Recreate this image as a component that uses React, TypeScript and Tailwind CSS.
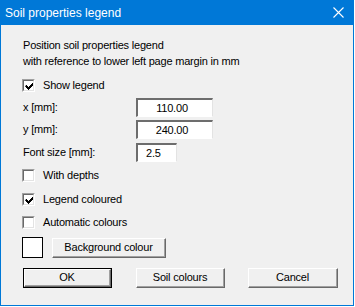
import React from "react";

const font = { fontFamily: '"Liberation Sans", Arial, sans-serif' };

function Check({ checked }: { checked: boolean }) {
  return (
    <div className="w-[13px] h-[13px] bg-white border-t border-l border-t-[#a0a0a0] border-l-[#a0a0a0] border-b border-r border-b-white border-r-white relative shrink-0">
      <div className="absolute inset-0 border-t border-l border-t-[#696969] border-l-[#696969] border-b border-r border-b-[#e3e3e3] border-r-[#e3e3e3]">
        {checked && (
          <svg width="9" height="9" viewBox="0 0 9 9" className="absolute left-[1px] top-[1px]">
            <path d="M1 3h1v1h1v1h1v-1h1v-1h1v-1h1v-1h1v3h-1v1h-1v1h-1v1h-1v1h-1v-1h-1v-1h-1v-1h-1z" fill="#000" />
          </svg>
        )}
      </div>
    </div>
  );
}

function CheckRow({ checked, label, className = "" }: { checked: boolean; label: string; className?: string }) {
  return (
    <div className={"flex items-center h-[13px] " + className}>
      <Check checked={checked} />
      <span className="ml-[8px] text-[11px] leading-[13px] tracking-[-0.2px] text-black">{label}</span>
    </div>
  );
}

function Input({ value, w, align, className = "" }: { value: string; w: string; align: "center" | "left"; className?: string }) {
  return (
    <div className={"h-[19px] bg-white border-t-2 border-l-2 border-t-[#6d6d6d] border-l-[#6d6d6d] border-b border-r border-b-[#ffffff] border-r-[#e3e3e3] flex items-center text-[11px] text-black " + w + " " + (align === "center" ? "justify-center pr-[6px]" : "pl-[8px]") + " " + className}>
      {value}
    </div>
  );
}

function Button({ label, def = false, className = "" }: { label: string; def?: boolean; className?: string }) {
  return (
    <div className={(def ? "border border-[#000] " : "") + "bg-[#f0f0f0] " + className}>
      <div className="h-full border-t border-l border-t-white border-l-white border-b border-r border-b-[#696969] border-r-[#696969] flex items-center justify-center">
        <div className="h-full w-full border-b border-r border-b-[#a0a0a0] border-r-[#a0a0a0] flex items-center justify-center text-[11px] tracking-[-0.2px] text-black">
          {label}
        </div>
      </div>
    </div>
  );
}

export default function App() {
  return (
    <div className="w-[355px] h-[307px] bg-white" style={font}>
      <div className="w-[354px] h-[306px] border border-[#0078d7] border-t-0 flex flex-col bg-[#f0f0f0]">
        <div className="h-[25px] bg-[#0078d7] -mx-px flex items-center justify-between shrink-0">
          <span className="ml-[5px] text-white text-[12px]">Soil properties legend</span>
          <svg width="11" height="11" viewBox="0 0 11 11" className="mr-[10px]">
            <path d="M0.5 0.5L10.5 10.5M10.5 0.5L0.5 10.5" stroke="white" strokeWidth="1.1" />
          </svg>
        </div>
        <div className="flex flex-col pl-[21px] pt-[12px] text-black tracking-[-0.2px]">
          <div className="text-[11px] leading-[16px] ml-px">Position soil properties legend</div>
          <div className="text-[11px] leading-[16px] ml-px">with reference to lower left page margin in mm</div>
          <CheckRow checked={true} label="Show legend" className="mt-[10px]" />
          <div className="flex items-center mt-[6px]">
            <span className="w-[113px] ml-px text-[11px]">x [mm]:</span>
            <Input value="110.00" w="w-[77px]" align="center" />
          </div>
          <div className="flex items-center mt-[3px]">
            <span className="w-[113px] ml-px text-[11px]">y [mm]:</span>
            <Input value="240.00" w="w-[77px]" align="center" />
          </div>
          <div className="flex items-center mt-[4px]">
            <span className="w-[113px] ml-px text-[11px]">Font size [mm]:</span>
            <Input value="2.5" w="w-[41px]" align="left" />
          </div>
          <CheckRow checked={false} label="With depths" className="mt-[7px]" />
          <CheckRow checked={true} label="Legend coloured" className="mt-[11px]" />
          <CheckRow checked={false} label="Automatic colours" className="mt-[10px]" />
          <div className="flex items-center mt-[8px] h-[21px]">
            <div className="w-[21px] h-[21px] bg-white border border-black" />
            <Button label="Background colour" className="ml-[9px] w-[114px] h-[20px]" />
          </div>
          <div className="flex items-center mt-[10px]">
            <Button label="OK" def className="ml-px w-[89px] h-[20px]" />
            <Button label="Soil colours" className="ml-[24px] w-[89px] h-[20px]" />
            <Button label="Cancel" className="ml-[23px] w-[90px] h-[20px]" />
          </div>
        </div>
      </div>
    </div>
  );
}
